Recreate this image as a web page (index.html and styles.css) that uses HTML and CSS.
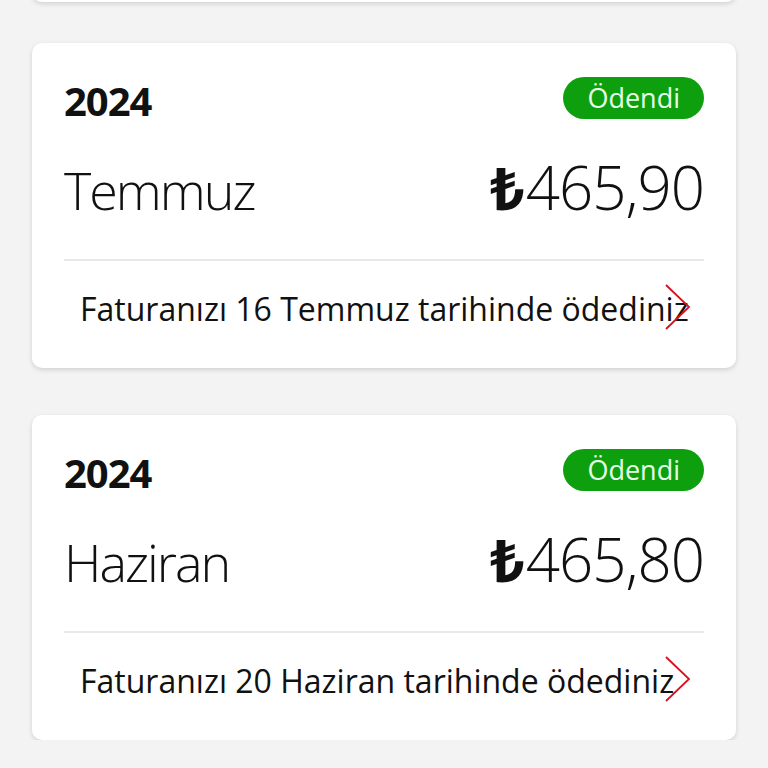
FILE: index.html
```html
<!DOCTYPE html>
<html lang="tr">
<head>
    <meta charset="UTF-8">
    <meta name="viewport" content="width=device-width, initial-scale=1.0">
    <title>Faturalarım</title>
    <link rel="stylesheet" href="styles.css">
</head>
<body>
    <div class="bill-list">
        <!-- önceki kartın alt kenarı -->
        <div class="bill-card bill-card-prev"></div>

        <div class="bill-card">
            <div class="bill-head">
                <div class="bill-year">2024</div>
                <span class="bill-status">Ödendi</span>
            </div>
            <div class="bill-main">
                <div class="bill-month">Temmuz</div>
                <div class="bill-amount"><span class="lira">₺</span>465,90</div>
            </div>
            <div class="bill-foot">
                <span class="bill-note">Faturanızı 16 Temmuz tarihinde ödediniz</span>
                <svg class="chevron" width="28" height="48" viewBox="0 0 28 48">
                    <polyline points="2,2 25,24 2,46" />
                </svg>
            </div>
        </div>

        <div class="bill-card">
            <div class="bill-head">
                <div class="bill-year">2024</div>
                <span class="bill-status">Ödendi</span>
            </div>
            <div class="bill-main">
                <div class="bill-month">Haziran</div>
                <div class="bill-amount"><span class="lira">₺</span>465,80</div>
            </div>
            <div class="bill-foot">
                <span class="bill-note">Faturanızı 20 Haziran tarihinde ödediniz</span>
                <svg class="chevron" width="28" height="48" viewBox="0 0 28 48">
                    <polyline points="2,2 25,24 2,46" />
                </svg>
            </div>
        </div>
    </div>
</body>
</html>
```

FILE: styles.css
```css
/* temel */
* {
    box-sizing: border-box;
    margin: 0;
    padding: 0;
}

body {
    font-family: 'Open Sans', 'Noto Sans', sans-serif;
    background-color: #f3f3f3;
    color: #111;
    overflow: hidden;
}

.bill-list {
    display: flex;
    flex-direction: column;
    gap: 47px;
    padding: 0 32px;
}

.bill-card {
    background-color: #fff;
    border-radius: 10px;
    box-shadow: 0 2px 5px rgba(0,0,0,0.14);
    padding: 0 32px;
}
.bill-card-prev {
    height: 40px;
    margin-top: -38px;
    margin-bottom: -6px;
}

.bill-head {
    display: flex;
    justify-content: space-between;
    align-items: center;
    padding-top: 37px;
    height: 79px;
}
.bill-year {
    font-size: 40px;
    font-weight: 700;
    letter-spacing: -1px;
    line-height: 42px;
}
.bill-status {
    background-color: #0e9f0e;
    color: #e6ffe6;
    border-radius: 21px;
    font-size: 27px;
    line-height: 42px;
    height: 42px;
    padding: 0 24px;
    margin-top: -6px;
}

.bill-main {
    display: flex;
    justify-content: space-between;
    align-items: baseline;
    height: 139px;
    padding-top: 24px;
    border-bottom: 2px solid #e8e8e8;
}
.bill-month {
    font-size: 52px;
    font-weight: 300;
    letter-spacing: -2px;
}
.bill-amount {
    font-size: 60px;
    font-weight: 300;
    letter-spacing: -1px;
}
.lira {
    font-weight: 700;
    margin-right: 2px;
}

.bill-foot {
    position: relative;
    height: 107px;
    padding: 26px 0 0 16px;
}
.bill-note {
    font-size: 32px;
}
.chevron {
    position: absolute;
    right: 12px;
    top: 22px;
}
.chevron polyline {
    fill: none;
    stroke: #d8101e;
    stroke-width: 1.8;
}
```
